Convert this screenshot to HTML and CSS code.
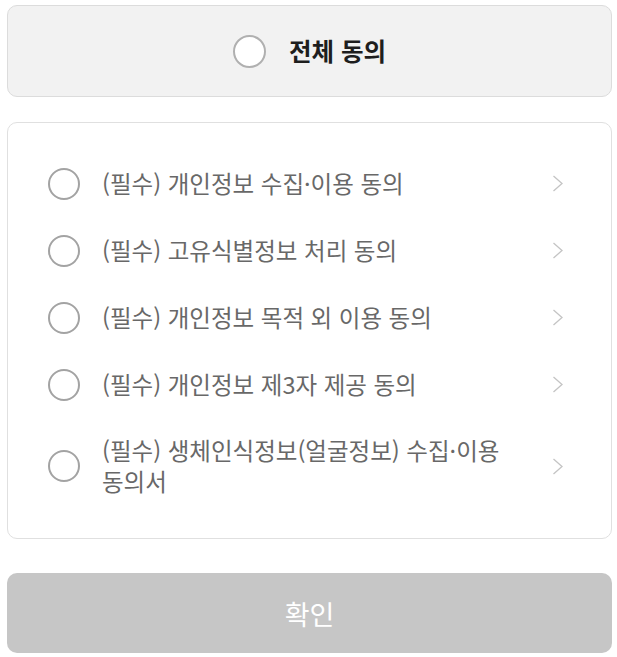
FILE: index.html
```html
<!DOCTYPE html>
<html lang="ko">
<head>
<meta charset="utf-8">
<title>약관 동의</title>
<link rel="stylesheet" href="styles.css">
</head>
<body>
<div class="page">
  <div class="all-agree">
    <span class="radio radio-lg"></span>
    <span class="all-label">전체 동의</span>
  </div>

  <div class="terms">
    <div class="term">
      <span class="radio"></span>
      <span class="term-label">(필수) 개인정보 수집·이용 동의</span>
      <svg class="chev" viewBox="0 0 12 17" width="12" height="17"><polyline points="1.5,1 10,8.5 1.5,16"/></svg>
    </div>
    <div class="term">
      <span class="radio"></span>
      <span class="term-label">(필수) 고유식별정보 처리 동의</span>
      <svg class="chev" viewBox="0 0 12 17" width="12" height="17"><polyline points="1.5,1 10,8.5 1.5,16"/></svg>
    </div>
    <div class="term">
      <span class="radio"></span>
      <span class="term-label">(필수) 개인정보 목적 외 이용 동의</span>
      <svg class="chev" viewBox="0 0 12 17" width="12" height="17"><polyline points="1.5,1 10,8.5 1.5,16"/></svg>
    </div>
    <div class="term">
      <span class="radio"></span>
      <span class="term-label">(필수) 개인정보 제3자 제공 동의</span>
      <svg class="chev" viewBox="0 0 12 17" width="12" height="17"><polyline points="1.5,1 10,8.5 1.5,16"/></svg>
    </div>
    <div class="term term-multi">
      <span class="radio"></span>
      <span class="term-label">(필수) 생체인식정보(얼굴정보) 수집·이용 동의서</span>
      <svg class="chev" viewBox="0 0 12 17" width="12" height="17"><polyline points="1.5,1 10,8.5 1.5,16"/></svg>
    </div>
  </div>

  <button class="confirm" type="button">확인</button>
</div>
</body>
</html>
```

FILE: styles.css
```css
* { box-sizing: border-box; }

html, body {
  margin: 0;
  padding: 0;
  background: #ffffff;
}

body {
  font-family: "Noto Sans CJK KR", "Noto Sans", sans-serif;
}

.page {
  padding: 5px 5px 0 7px;
  display: flex;
  flex-direction: column;
}

.all-agree {
  height: 92px;
  background: #f2f2f2;
  border: 1px solid #dcdcdc;
  border-radius: 10px;
  display: flex;
  align-items: center;
  justify-content: center;
  gap: 21px;
}

.radio {
  flex: none;
  width: 32px;
  height: 32px;
  border: 2px solid #a3a3a3;
  border-radius: 50%;
  background: #ffffff;
}

.radio-lg {
  width: 33px;
  height: 33px;
  border-color: #b0b0b0;
}

.all-label {
  font-size: 24.5px;
  font-weight: 700;
  color: #1e1e1e;
  line-height: 1;
  margin-left: 2px;
}

.terms {
  margin-top: 25px;
  border: 1px solid #e0e0e0;
  border-radius: 10px;
  background: #ffffff;
  padding: 27px 0 24px;
  display: flex;
  flex-direction: column;
}

.term {
  min-height: 67px;
  display: flex;
  align-items: center;
  padding: 0 47px 0 40px;
}

.term-multi {
  min-height: 96px;
}

.term-label {
  flex: 1;
  margin-left: 22px;
  margin-right: 30px;
  font-size: 23.5px;
  line-height: 31px;
  color: #686868;
  word-break: keep-all;
}

.chev {
  flex: none;
  fill: none;
  stroke: #c4c4c4;
  stroke-width: 1.3;
}

.confirm {
  margin-top: 34px;
  height: 80px;
  border: none;
  border-radius: 10px;
  background: #c6c6c6;
  color: #ffffff;
  font-family: "Noto Sans CJK KR", "Noto Sans", sans-serif;
  font-size: 27px;
  padding: 0;
}
```
